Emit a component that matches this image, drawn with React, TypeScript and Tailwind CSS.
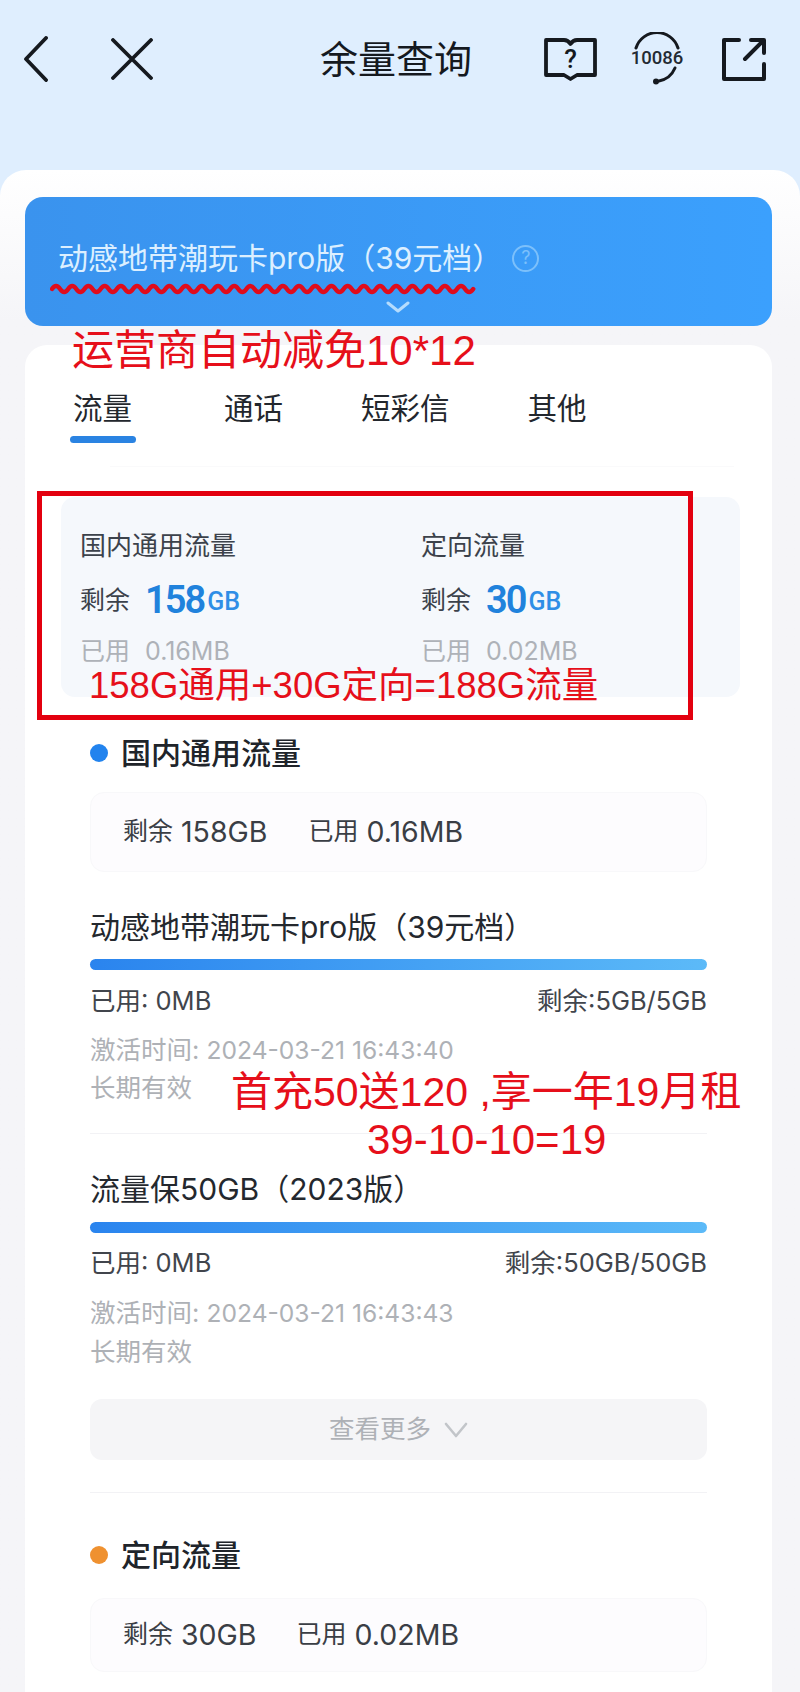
import React from "react";

const CN = "font-['Inter','Noto_Sans_CJK_SC',sans-serif]";
const RED = "font-['Liberation_Sans','Noto_Sans_CJK_SC',sans-serif]";
const NUM = "font-['Roboto','Noto_Sans_CJK_SC',sans-serif]";

function Book() {
  return (
    <svg width="53" height="44" viewBox="0 0 53 44" fill="none" stroke="#15191f" strokeWidth="3.8" strokeLinejoin="round" strokeLinecap="round">
      <path d="M2 3 H20 Q24 3 26.5 7 Q29 3 33 3 H51 V38 H33 L26.5 42 L20 38 H2 Z" />
      <text x="26.5" y="31" textAnchor="middle" fontSize="26" fontWeight="500" fill="#15191f" stroke="none" fontFamily="Roboto, sans-serif">?</text>
    </svg>
  );
}

function Hotline() {
  return (
    <div className="relative flex h-[54px] w-[60px]">
      <svg width="60" height="54" viewBox="0 0 60 54" fill="none" stroke="#15191f" strokeWidth="3" strokeLinecap="round">
        <path d="M9 16 A22 22 0 0 1 51 16" />
        <path d="M48 36 A22 22 0 0 1 32 49" />
        <circle cx="29" cy="49.5" r="3" fill="#15191f" stroke="none" />
      </svg>
      <span className={`${NUM} absolute inset-x-0 top-[15px] text-center text-[18.5px] leading-[22px] font-medium text-[#232a33]`}>10086</span>
    </div>
  );
}

function Share() {
  return (
    <svg width="44" height="44" viewBox="0 0 44 44" fill="none" stroke="#15191f" strokeWidth="4" strokeLinecap="round" strokeLinejoin="round">
      <path d="M17 3 H2 V42 H42 V27" />
      <path d="M42 3 V16 M42 3 H29 M41 4 L23 22" />
    </svg>
  );
}

function Wave() {
  let d = "M2 6";
  for (let i = 0; i < 26; i++) {
    d += " q4.05 -6 8.1 0 q4.05 6 8.1 0";
  }
  return (
    <svg className="absolute left-[25px] top-[86px]" width="428" height="12" viewBox="0 0 428 12" fill="none" stroke="#e00c1c" strokeWidth="4.4" strokeLinecap="round">
      <path d={d} />
    </svg>
  );
}

function Stat({ title, big, used, wide }: { title: string; big: string; used: string; wide: string }) {
  return (
    <div className={wide}>
      <div className="mt-[31px] text-[26px] leading-[36px] text-[#3c424b]">{title}</div>
      <div className="mt-[14px] flex h-[44px] items-center">
        <span className="text-[25px] leading-[44px] text-[#3c424b]">剩余</span>
        <span className={`${NUM} ml-[15px] text-[38px] leading-[44px] font-semibold tracking-[-2px] text-[#2082dc]`}>{big}</span>
        <span className={`${NUM} ml-[3px] mt-[4px] text-[25px] leading-[44px] font-medium text-[#2f8ee6]`}>GB</span>
      </div>
      <div className="mt-[11px] flex text-[25px] leading-[36px] text-[#aeb2b8]">
        <span>已用</span>
        <span className="ml-[15px]">{used}</span>
      </div>
    </div>
  );
}

function Heading({ color, mt, text }: { color: string; mt: string; text: string }) {
  return (
    <div className={`${mt} flex h-[40px] items-center`}>
      <span className={`h-[18px] w-[18px] rounded-full ${color}`} />
      <span className="ml-[13px] text-[30px] leading-[40px] font-medium text-[#20242a]">{text}</span>
    </div>
  );
}

function Amount({ mt, h, remain, used, gap }: { mt: string; h: string; remain: string; used: string; gap: string }) {
  return (
    <div className={`${mt} ${h} flex items-center rounded-[14px] border border-[#f8f8fa] bg-[#fdfcfe] pl-[32px] text-[#3a3e45]`}>
      <span className="text-[25px]">剩余</span>
      <span className="ml-[8px] text-[28.5px]">{remain}</span>
      <span className={`${gap} text-[25px]`}>已用</span>
      <span className="ml-[8px] text-[28.5px]">{used}</span>
    </div>
  );
}

function Pack({ title, mt, barMt, rowMt, dateMt, termMt, remain, date }: { title: string; mt: string; barMt: string; rowMt: string; dateMt: string; termMt: string; remain: string; date: string }) {
  return (
    <div>
      <div className={`${mt} text-[30px] leading-[40px] text-[#24282e]`}>{title}</div>
      <div className={`${barMt} h-[11px] rounded-full bg-gradient-to-r from-[#2a84ee] to-[#5cbaf8]`} />
      <div className={`${rowMt} flex justify-between text-[25.5px] leading-[36px] text-[#41454c]`}>
        <span>已用: 0MB</span>
        <span>{remain}</span>
      </div>
      <div className={`${dateMt} text-[25.5px] leading-[36px] text-[#aeb1b6]`}>
        激活时间: <span className="text-[24.6px]">{date}</span>
      </div>
      <div className={`${termMt} text-[25.5px] leading-[36px] text-[#aeb1b6]`}>长期有效</div>
    </div>
  );
}

export default function App() {
  return (
    <div className={`${CN} relative h-[1692px] w-[800px] overflow-hidden bg-[#dfeefe]`}>
      <header className="flex h-[118px] items-center text-[#15191f]">
        <svg className="ml-[24px]" width="24" height="46" viewBox="0 0 24 46" fill="none" stroke="#15191f" strokeWidth="3.8" strokeLinecap="round" strokeLinejoin="round">
          <path d="M22 2 L2 23 L22 44" />
        </svg>
        <svg className="ml-[63px]" width="42" height="42" viewBox="0 0 42 42" fill="none" stroke="#15191f" strokeWidth="3.8" strokeLinecap="round">
          <path d="M2 2 L40 40 M40 2 L2 40" />
        </svg>
        <h1 className="ml-[167px] w-[153px] text-[38px] leading-[48px] font-normal whitespace-nowrap">余量查询</h1>
        <div className="ml-[71px] flex"><Book /></div>
        <div className="ml-[30px] flex"><Hotline /></div>
        <div className="ml-[35px] flex"><Share /></div>
      </header>

      <main className="mt-[52px] h-[1522px] rounded-t-[26px] bg-gradient-to-b from-white to-[#f5f5f8] to-[10%] pl-[25px] pr-[28px] pt-[27px]">
        <section className="relative h-[129px] rounded-[18px] bg-gradient-to-r from-[#3a93ee] to-[#3ba0fd]">
          <div className="flex items-center pl-[33px] pt-[41px]">
            <span className="text-[30px] leading-[40px] text-[#dcefff]">动感地带潮玩卡pro版（39元档）</span>
            <span className="ml-[10px] flex h-[27px] w-[27px] items-center justify-center rounded-full border-2 border-[#7cc0fb] text-[18px] leading-none text-[#7cc0fb]">?</span>
          </div>
          <Wave />
          <svg className="absolute left-[361px] top-[104px]" width="24" height="12" viewBox="0 0 24 12" fill="none" stroke="#b5dcfd" strokeWidth="3" strokeLinecap="round" strokeLinejoin="round">
            <path d="M2 2 L12 10 L22 2" />
          </svg>
        </section>

        <section className="mt-[19px] h-[1400px] rounded-t-[22px] bg-white pt-[43px]">
          <nav className="flex h-[40px] text-[29.5px] leading-[40px] text-[#23272d]">
            <span className="ml-[48px]">流量</span>
            <span className="ml-[92px]">通话</span>
            <span className="ml-[78px]">短彩信</span>
            <span className="ml-[78px]">其他</span>
          </nav>
          <div className="ml-[45px] mt-[8px] h-[7px] w-[66px] rounded-full bg-[#2a83e2]" />
          <div className="ml-[85px] mr-[38px] mt-[23px] h-px bg-[#fafafb]" />

          <div className="ml-[36px] mt-[30px] flex h-[200px] w-[679px] rounded-[14px] bg-[#f5f8fc] pl-[19px]">
            <Stat wide="w-[341px]" title="国内通用流量" big="158" used="0.16MB" />
            <Stat wide="w-[300px]" title="定向流量" big="30" used="0.02MB" />
          </div>

          <div className="ml-[65px] mr-[65px]">
            <Heading color="bg-[#2283ee]" mt="mt-[36px]" text="国内通用流量" />
            <Amount mt="mt-[19px]" h="h-[80px]" remain="158GB" used="0.16MB" gap="ml-[41px]" />
            <Pack title="动感地带潮玩卡pro版（39元档）" mt="mt-[35px]" barMt="mt-[12px]" rowMt="mt-[13px]" dateMt="mt-[13px]" termMt="mt-[2px]" remain="剩余:5GB/5GB" date="2024-03-21 16:43:40" />
            <div className="mt-[27px] h-px bg-[#f2f2f5]" />
            <Pack title="流量保50GB（2023版）" mt="mt-[35px]" barMt="mt-[13px]" rowMt="mt-[12px]" dateMt="mt-[14px]" termMt="mt-[3px]" remain="剩余:50GB/50GB" date="2024-03-21 16:43:43" />
            <button className="mt-[29px] flex h-[61px] w-full items-center justify-center rounded-[12px] bg-[#f5f5f7] text-[25.5px] text-[#aeb1b6]">
              <span>查看更多</span>
              <svg className="ml-[13px]" width="24" height="16" viewBox="0 0 24 16" fill="none" stroke="#c2c5c9" strokeWidth="2.6" strokeLinecap="round" strokeLinejoin="round">
                <path d="M2 2 L12 14 L22 2" />
              </svg>
            </button>
            <div className="mt-[32px] h-px bg-[#f2f2f5]" />
            <Heading color="bg-[#ef9130]" mt="mt-[42px]" text="定向流量" />
            <Amount mt="mt-[23px]" h="h-[74px]" remain="30GB" used="0.02MB" gap="ml-[40px]" />
          </div>
        </section>
      </main>

      <div className={`${RED} absolute left-[72px] top-[327px] text-[42px] leading-[48px] whitespace-nowrap text-[#e60f1a]`}>运营商自动减免10*12</div>
      <div className="absolute left-[37px] top-[491px] h-[229px] w-[656px] border-[5px] border-[#e3000f]" />
      <div className={`${RED} absolute left-[89px] top-[664px] text-[36.5px] leading-[44px] whitespace-nowrap text-[#e60f1a]`}>158G通用+30G定向=188G流量</div>
      <div className={`${RED} absolute left-[231px] top-[1070px] text-[41px] leading-[44px] whitespace-nowrap text-[#e60f1a]`}>首充50送120 ,享一年19月租</div>
      <div className={`${RED} absolute left-[367px] top-[1118px] text-[42px] leading-[44px] whitespace-nowrap text-[#e60f1a]`}>39-10-10=19</div>
    </div>
  );
}
